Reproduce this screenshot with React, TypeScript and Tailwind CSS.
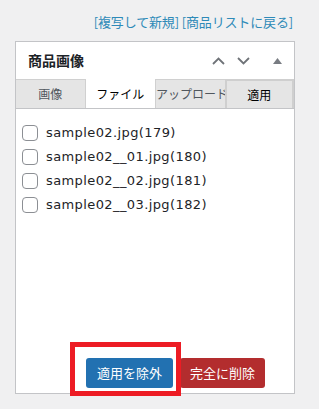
import React from 'react';

const jp = "font-['Noto_Sans_CJK_JP','Noto_Sans',sans-serif]";

const files = [
  'sample02.jpg(179)',
  'sample02__01.jpg(180)',
  'sample02__02.jpg(181)',
  'sample02__03.jpg(182)',
];

export default function App() {
  return (
    <div className={`relative w-[319px] h-[409px] bg-[#f0f0f1] overflow-hidden ${jp}`}>
      {/* top links */}
      <div className="pt-[12px] pr-[26px] text-right text-[13px] leading-[20px] tracking-[-0.15px] text-[#2e8ab8]">
        <span>[複写して新規]</span> <span>[商品リストに戻る]</span>
      </div>

      {/* panel */}
      <div className="mt-[9px] ml-[15px] w-[280px] h-[353px] border border-[#c3c4c7] bg-white flex flex-col">
        <div className="h-[37px] flex items-center pl-[12px] pr-[12px]">
          <h2 className="text-[14px] font-bold text-[#1d2327]">商品画像</h2>
          <div className="ml-auto flex items-center">
            <svg width="13" height="8" viewBox="0 0 13 8" className="mr-[12px] mt-[1px]">
              <polyline points="1,7 6.5,1.5 12,7" fill="none" stroke="#6f7378" strokeWidth="1.8" />
            </svg>
            <svg width="13" height="8" viewBox="0 0 13 8" className="mt-[1px]">
              <polyline points="1,1 6.5,6.5 12,1" fill="none" stroke="#6f7378" strokeWidth="1.8" />
            </svg>
            <svg width="9" height="6" viewBox="0 0 9 6" className="ml-[23px]">
              <polygon points="0,6 4.5,0 9,6" fill="#787c82" />
            </svg>
          </div>
        </div>

        {/* tabs */}
        <div className="grid grid-cols-4 border-b border-[#c3c4c7] text-[12px]">
          <div className="h-[29px] bg-[#e5e5e5] border-t border-r border-[#d0d0d0] flex items-center justify-center text-[#50575e]">
            画像
          </div>
          <div className="h-[29px] bg-white flex items-center justify-center text-black">
            ファイル
          </div>
          <div className="h-[29px] bg-[#e5e5e5] border-t border-l border-[#d0d0d0] text-[#50575e] leading-[28px] whitespace-nowrap overflow-hidden text-center">
            アップロード
          </div>
          <div className="h-[29px] bg-[#e5e5e5] border-2 border-b-0 border-[#cfcfcf] flex items-center justify-center text-black">
            適用
          </div>
        </div>

        {/* file list */}
        <div className="pt-[12px] pl-[6px] font-['DejaVu_Sans','Noto_Sans',sans-serif] text-[13px] tracking-[0.4px] text-[#1d2327]">
          {files.map((f) => (
            <label key={f} className="h-[24px] flex items-center">
              <span className="w-[16px] h-[16px] rounded-[4px] border border-[#8c8f94] bg-white shrink-0" />
              <span className="ml-[8px]">{f}</span>
            </label>
          ))}
        </div>

        {/* actions */}
        <div className="mt-auto pb-[5px] pr-[29px] flex justify-end gap-[7px] text-[13px] text-white">
          <button className="h-[30px] w-[87px] rounded-[3px] bg-[#2271b1]">適用を除外</button>
          <button className="h-[30px] w-[85px] rounded-[3px] bg-[#b32d2e]">完全に削除</button>
        </div>
      </div>

      {/* highlight */}
      <div className="absolute left-[70px] top-[342px] w-[111px] h-[54px] border-[5px] border-[#ed1c24]" />
    </div>
  );
}
